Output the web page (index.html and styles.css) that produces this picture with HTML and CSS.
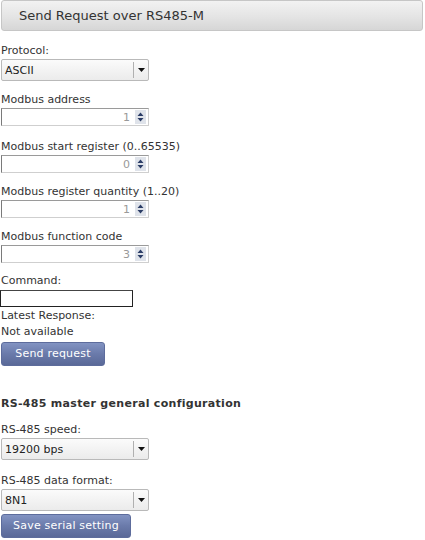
FILE: index.html
```html
<!DOCTYPE html>
<html>
<head>
<meta charset="utf-8">
<link rel="stylesheet" href="styles.css">
</head>
<body>
<div class="page">
  <div class="header">Send Request over RS485-M</div>

  <div class="field first">
    <div class="label">Protocol:</div>
    <div class="select"><span class="sel-text">ASCII</span><span class="sel-arrow"><svg width="7" height="4" viewBox="0 0 7 4"><path d="M0 0H7L3.5 4Z" fill="#111"/></svg></span></div>
  </div>

  <div class="field numf second">
    <div class="label">Modbus address</div>
    <div class="num"><span class="num-val">1</span><span class="spin"><svg width="9" height="12" viewBox="0 0 9 12"><path d="M4.5 1.5L7.5 5H1.5Z M4.5 10.5L7.5 7H1.5Z" fill="#2b3d66"/></svg></span></div>
  </div>

  <div class="field numf third">
    <div class="label">Modbus start register (0..65535)</div>
    <div class="num"><span class="num-val">0</span><span class="spin"><svg width="9" height="12" viewBox="0 0 9 12"><path d="M4.5 1.5L7.5 5H1.5Z M4.5 10.5L7.5 7H1.5Z" fill="#2b3d66"/></svg></span></div>
  </div>

  <div class="field numf">
    <div class="label">Modbus register quantity (1..20)</div>
    <div class="num"><span class="num-val">1</span><span class="spin"><svg width="9" height="12" viewBox="0 0 9 12"><path d="M4.5 1.5L7.5 5H1.5Z M4.5 10.5L7.5 7H1.5Z" fill="#2b3d66"/></svg></span></div>
  </div>

  <div class="field numf">
    <div class="label">Modbus function code</div>
    <div class="num"><span class="num-val">3</span><span class="spin"><svg width="9" height="12" viewBox="0 0 9 12"><path d="M4.5 1.5L7.5 5H1.5Z M4.5 10.5L7.5 7H1.5Z" fill="#2b3d66"/></svg></span></div>
  </div>

  <div class="cmd">
    <div class="label">Command:</div>
    <div class="cmd-input"></div>
    <div class="line">Latest Response:</div>
    <div class="line">Not available</div>
    <div class="button send">Send request</div>
  </div>

  <div class="heading">RS-485 master general configuration</div>

  <div class="field cfg">
    <div class="label">RS-485 speed:</div>
    <div class="select"><span class="sel-text">19200 bps</span><span class="sel-arrow"><svg width="7" height="4" viewBox="0 0 7 4"><path d="M0 0H7L3.5 4Z" fill="#111"/></svg></span></div>
  </div>

  <div class="field cfg last">
    <div class="label">RS-485 data format:</div>
    <div class="select"><span class="sel-text">8N1</span><span class="sel-arrow"><svg width="7" height="4" viewBox="0 0 7 4"><path d="M0 0H7L3.5 4Z" fill="#111"/></svg></span></div>
  </div>

  <div class="button save">Save serial setting</div>
</div>
</body>
</html>
```

FILE: styles.css
```css
html, body {
  margin: 0;
  padding: 0;
  background: #fff;
}
body {
  font-family: "DejaVu Sans", sans-serif;
  font-size: 11px;
  color: #333;
}
.page {
  padding: 0 1px;
}
.header {
  margin: 0 1px 0 0;
  height: 31px;
  box-sizing: border-box;
  border: 1px solid #c6c6c6;
  border-radius: 3px;
  background: linear-gradient(#f2f2f2, #e4e4e4 55%, #d6d6d6);
  font-size: 13px;
  line-height: 29px;
  padding-left: 17px;
  color: #333;
}
.field {
  margin-top: 12px;
}
.field.first {
  margin-top: 13px;
}
.field.second {
  margin-top: 12px;
}
.field.third {
  margin-top: 14px;
}
.label, .line {
  line-height: 14px;
  height: 14px;
}
.label {
  margin-bottom: 1px;
}
.select {
  width: 148px;
  height: 22px;
  box-sizing: border-box;
  border: 1px solid #b9b9b9;
  border-radius: 2px;
  background: linear-gradient(#fbfbfb, #ebebeb);
  display: flex;
  align-items: center;
}
.sel-text {
  flex: 1;
  padding-left: 3px;
  color: #222;
}
.sel-arrow {
  width: 14px;
  height: 16px;
  border-left: 1px solid #b0b0b0;
  display: flex;
  align-items: center;
  justify-content: center;
}
.num {
  width: 148px;
  height: 18px;
  box-sizing: border-box;
  border: 1px solid #cfcfcf;
  border-left-color: #7a7a7a;
  border-top-color: #9a9a9a;
  background: #fff;
  display: flex;
  align-items: center;
}
.num-val {
  flex: 1;
  text-align: right;
  padding-right: 5px;
  color: #999;
}
.spin {
  width: 11px;
  height: 14px;
  margin-right: 2px;
  background: #dfe3ea;
  display: flex;
  align-items: center;
  justify-content: center;
}
.cmd {
  margin-top: 11px;
}
.cmd .label {
  margin-bottom: 2px;
}
.cmd-input {
  width: 133px;
  height: 17px;
  margin-left: -1px;
  box-sizing: border-box;
  border: 1px solid #222;
  border-top-color: #444;
  background: #fff;
  margin-bottom: 2px;
}
.line {
  margin-bottom: 2px;
}
.button {
  height: 24px;
  box-sizing: border-box;
  border-radius: 3px;
  background: linear-gradient(#8293c2, #6a7aaa 50%, #5a6998);
  border: 1px solid #5d6c9c;
  color: #fff;
  text-align: center;
  line-height: 22px;
  letter-spacing: 0.2px;
}
.send {
  width: 104px;
  margin-top: 3px;
}
.heading {
  margin-top: 31px;
  font-weight: bold;
  line-height: 14px;
  letter-spacing: 0.3px;
  color: #333;
}
.field.cfg {
  margin-top: 12px;
}
.field.cfg.last {
  margin-top: 14px;
}
.save {
  width: 130px;
  margin-top: 3px;
}
```
